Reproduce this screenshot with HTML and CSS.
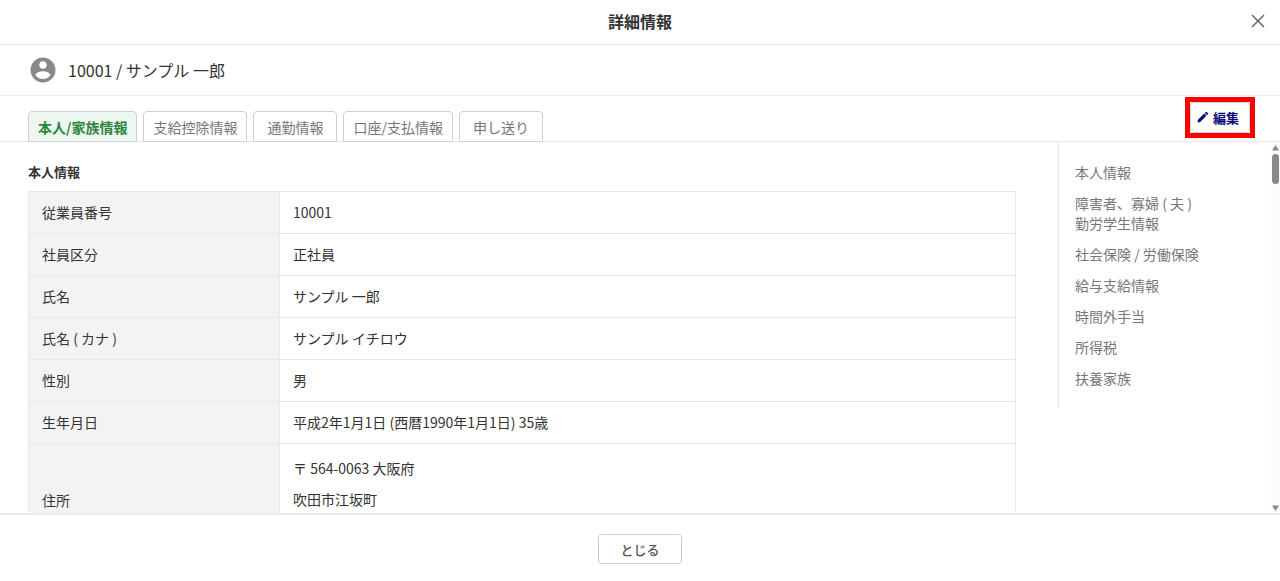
FILE: index.html
```
<!DOCTYPE html>
<html lang="ja">
<head>
  <meta charset="UTF-8">
  <meta name="viewport" content="width=device-width, initial-scale=1.0">
  <title>詳細情報</title>
  <link rel="stylesheet" href="styles.css">
</head>
<body>
  <header class="dialog-header">
    <h1 class="dialog-title">詳細情報</h1>
    <button type="button" class="icon-button" aria-label="とじる">
      <svg width="14" height="14" viewBox="0 0 14 14"><path d="M1 1l12 12M13 1L1 13" fill="none" stroke="#666" stroke-width="1.5"/></svg>
    </button>
  </header>

  <div class="employee">
    <svg width="30" height="30" viewBox="0 0 24 24" fill="#888"><path d="M12 2C6.48 2 2 6.48 2 12s4.48 10 10 10 10-4.48 10-10S17.52 2 12 2zm0 3c1.66 0 3 1.34 3 3s-1.34 3-3 3-3-1.34-3-3 1.34-3 3-3zm0 14.2c-2.5 0-4.71-1.28-6-3.22.03-1.99 4-3.08 6-3.08 1.99 0 5.97 1.09 6 3.08-1.29 1.94-3.5 3.22-6 3.22z"/></svg>
    <span>10001 / サンプル 一郎</span>
  </div>

  <div class="toolbar">
    <nav class="tabs">
      <button type="button" class="tab active">本人/家族情報</button>
      <button type="button" class="tab">支給控除情報</button>
      <button type="button" class="tab">通勤情報</button>
      <button type="button" class="tab">口座/支払情報</button>
      <button type="button" class="tab">申し送り</button>
    </nav>
    <div class="highlight">
      <button type="button" class="edit-button">
        <svg width="14" height="14" viewBox="0 0 24 24" fill="#0b0b78"><path d="M3 17.25V21h3.75L17.81 9.94l-3.75-3.75L3 17.25zM20.71 7.04c.39-.39.39-1.02 0-1.41l-2.34-2.34a.9959.9959 0 0 0-1.41 0l-1.83 1.83 3.75 3.75 1.83-1.83z"/></svg>
        <span>編集</span>
      </button>
    </div>
  </div>

  <div class="body">
    <div class="scroll-area">
      <main class="content" id="personal">
        <h2 class="section-title">本人情報</h2>
        <table class="info-table">
          <tr><th scope="row">従業員番号</th><td>10001</td></tr>
          <tr><th scope="row">社員区分</th><td>正社員</td></tr>
          <tr><th scope="row">氏名</th><td>サンプル 一郎</td></tr>
          <tr><th scope="row">氏名 ( カナ )</th><td>サンプル イチロウ</td></tr>
          <tr><th scope="row">性別</th><td>男</td></tr>
          <tr><th scope="row">生年月日</th><td>平成2年1月1日 (西暦1990年1月1日) 35歳</td></tr>
          <tr class="address">
            <th scope="row">住所</th>
            <td>〒 564-0063 大阪府<br>吹田市江坂町<br>&nbsp;</td>
          </tr>
        </table>
      </main>
      <nav class="side-nav">
        <a href="#personal">本人情報</a>
        <a href="#disability">障害者、寡婦 ( 夫 )<br>勤労学生情報</a>
        <a href="#insurance">社会保険 / 労働保険</a>
        <a href="#salary">給与支給情報</a>
        <a href="#overtime">時間外手当</a>
        <a href="#income-tax">所得税</a>
        <a href="#family">扶養家族</a>
      </nav>
    </div>
    <div class="scrollbar" aria-hidden="true">
      <svg width="7" height="6" viewBox="0 0 7 6" fill="#888"><path d="M3.5 0L7 5.5H0z"/></svg>
      <div class="thumb"></div>
      <svg class="arrow-down" width="7" height="6" viewBox="0 0 7 6" fill="#888"><path d="M0 .5h7L3.5 6z"/></svg>
    </div>
  </div>

  <footer class="dialog-footer">
    <button type="button" class="close-button">とじる</button>
  </footer>
</body>
</html>
```

FILE: styles.css
```
* {
  box-sizing: border-box;
}
body {
  display: flex;
  flex-direction: column;
  height: 100vh;
  margin: 0;
  font-family: "Noto Sans CJK JP", sans-serif;
  font-size: 14px;
  line-height: 20px;
  color: #333;
  background-color: #fff;
}
button {
  font-family: inherit;
  background-color: #fff;
  cursor: pointer;
}
.dialog-header {
  display: grid;
  grid-template-columns: 1fr auto 1fr;
  align-items: center;
  height: 45px;
  padding: 0 15px 2px;
  border-bottom: 1px solid #ebebeb;
}
.dialog-title {
  grid-column: 2;
  margin: 0;
  font-size: 16px;
  font-weight: bold;
}
.icon-button {
  display: flex;
  justify-self: end;
  padding: 0;
  border: none;
}
.employee {
  display: flex;
  align-items: center;
  gap: 10px;
  height: 51px;
  padding: 0 28px;
  font-size: 16px;
  border-bottom: 1px solid #ebebeb;
}
.toolbar {
  display: flex;
  justify-content: space-between;
  height: 46px;
  padding: 0 25px 0 28px;
  border-bottom: 1px solid #e6e6e6;
}
.tabs {
  display: flex;
  align-self: flex-end;
  gap: 6px;
  margin-bottom: -1px;
}
.tab {
  min-width: 84px;
  height: 31px;
  padding: 0 9px;
  font-size: 14px;
  color: #777;
  border: 1px solid #d0d0d0;
  border-radius: 4px 4px 0 0;
}
.tab.active {
  font-weight: bold;
  color: #2e8540;
  background-color: #edf7f0;
}
.highlight {
  align-self: flex-start;
  margin-top: 1px;
  border: 5px solid #f00;
}
.edit-button {
  display: flex;
  align-items: center;
  justify-content: center;
  gap: 3px;
  width: 60px;
  height: 31px;
  padding: 0 5px 1px 0;
  font-size: 13px;
  font-weight: bold;
  color: #0b0b78;
  border: 1px solid #d0d0d0;
  border-radius: 4px;
}
.body {
  display: flex;
  flex: 1;
  min-height: 0;
}
.scroll-area {
  display: flex;
  flex: 1;
  align-items: flex-start;
  overflow-y: auto;
  scrollbar-width: none;
}
.content {
  flex: 1;
  padding: 20px 42px 0 28px;
}
.section-title {
  margin: 0 0 9px;
  font-size: 13px;
  font-weight: bold;
}
.info-table {
  width: 100%;
  border-collapse: collapse;
}
.info-table th,
.info-table td {
  height: 42px;
  padding: 9px 13px 11px;
  text-align: left;
  border: 1px solid #e8e8e8;
}
.info-table th {
  width: 251px;
  font-weight: normal;
  background-color: #f3f3f3;
}
.address td {
  line-height: 31px;
}
.side-nav {
  display: flex;
  flex-direction: column;
  gap: 11px;
  width: 213px;
  padding: 20px 16px;
  border-left: 1px solid #e8e8e8;
}
.side-nav a {
  color: #777;
  text-decoration: none;
}
.scrollbar {
  display: flex;
  flex-direction: column;
  align-items: center;
  width: 9px;
  padding: 3px 0 2px;
  background-color: #fcfcfc;
}
.thumb {
  width: 7px;
  height: 30px;
  margin-top: 3px;
  border-radius: 4px;
  background-color: #888;
}
.arrow-down {
  margin-top: auto;
}
.dialog-footer {
  display: flex;
  justify-content: center;
  height: 68px;
  padding-top: 19px;
  border-top: 2px solid #ebebeb;
}
.close-button {
  width: 84px;
  height: 30px;
  padding: 0;
  font-size: 13px;
  font-weight: 500;
  color: #555;
  border: 1px solid #ccc;
  border-radius: 4px;
}
```
